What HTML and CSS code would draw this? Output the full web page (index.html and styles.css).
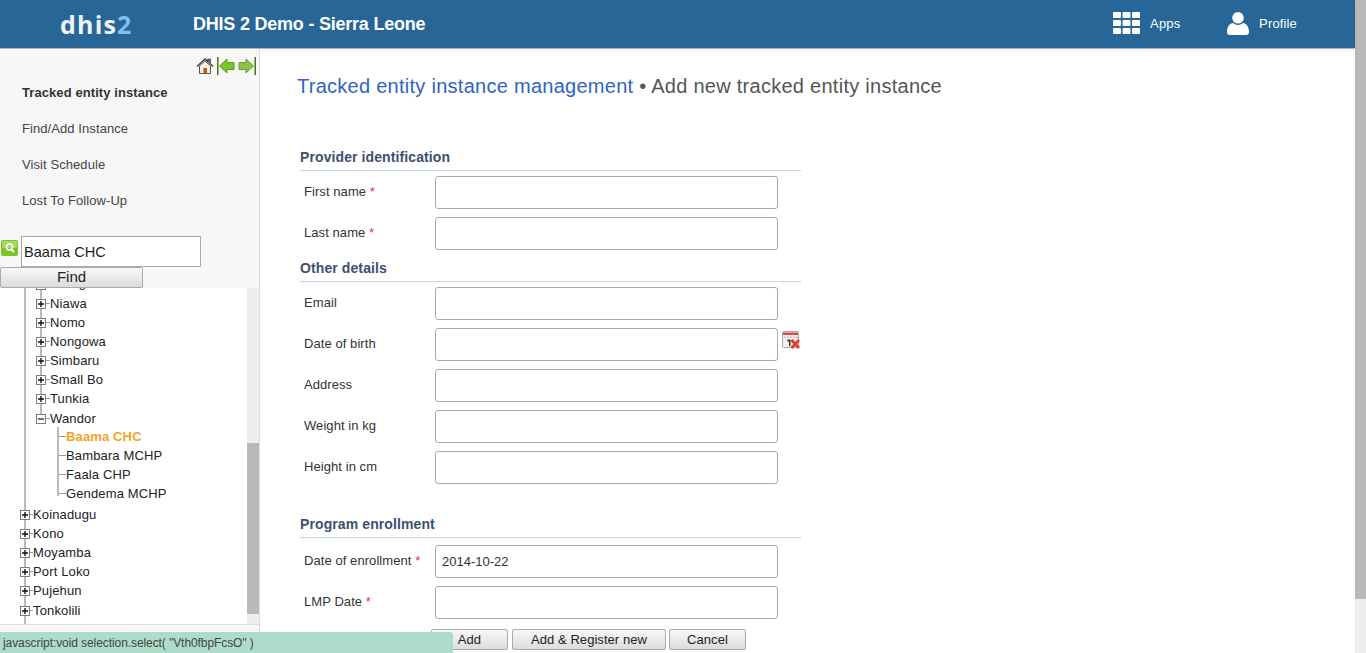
FILE: index.html
```html
<!DOCTYPE html>
<html lang="en">
<head>
<meta charset="utf-8">
<title>DHIS 2 Demo - Sierra Leone</title>
<link rel="stylesheet" href="styles.css">
</head>
<body>
<svg class="defs" width="0" height="0" aria-hidden="true">
  <symbol id="plus" viewBox="0 0 10 10"><rect x=".5" y=".5" width="9" height="9" fill="#fff" stroke="#7d7d7d"/><path d="M2 5h6M5 2v6" stroke="#111" stroke-width="1.400" fill="none"/></symbol>
  <symbol id="minus" viewBox="0 0 10 10"><rect x=".5" y=".5" width="9" height="9" fill="#fff" stroke="#7d7d7d"/><path d="M2 5h6" stroke="#111" stroke-width="1.200" fill="none"/></symbol>
</svg>
<div class="page">
  <div class="viewport">
    <header class="topbar">
      <div class="logo">dhis<span class="logo-two">2</span></div>
      <div class="site-title">DHIS 2 Demo - Sierra Leone</div>
      <nav class="top-nav">
        <a class="top-link apps-link">
          <svg class="apps-icon" width="27" height="22" viewBox="0 0 27 22"><g fill="#fff"><rect width="8" height="6" rx="1"/><rect x="9.500" width="8" height="6" rx="1"/><rect x="19" width="8" height="6" rx="1"/><rect y="8" width="8" height="6" rx="1"/><rect x="9.500" y="8" width="8" height="6" rx="1"/><rect x="19" y="8" width="8" height="6" rx="1"/><rect y="16" width="8" height="6" rx="1"/><rect x="9.500" y="16" width="8" height="6" rx="1"/><rect x="19" y="16" width="8" height="6" rx="1"/></g></svg>
          <span>Apps</span>
        </a>
        <a class="top-link profile-link">
          <svg width="22" height="23" viewBox="0 0 22 23"><g fill="#fff"><circle cx="11" cy="5.800" r="5.800"/><path d="M0 20c0-6 3-8.500 6-9 1.500 1.300 3 2 5 2s3.500-.7 5-2c3 .5 6 3 6 9 0 2-1 3-3 3H3c-2 0-3-1-3-3z"/></g></svg>
          <span>Profile</span>
        </a>
      </nav>
    </header>
    <div class="workspace">
      <aside class="sidebar">
        <div class="side-tools">
          <svg class="tool-home" width="18" height="18" viewBox="0 0 18 18"><path d="M1 9.500 9 2l3 2.800V2.500h2v4.200l3 2.800" fill="none" stroke="#444" stroke-width="1.600"/><path d="M3.500 9 9 4l5.500 5v7.500h-11z" fill="#f6f1e4" stroke="#555"/><rect x="7.500" y="11" width="3.500" height="5.500" fill="#c25a05"/></svg>
          <svg class="tool-arrow" width="18" height="18" viewBox="0 0 18 18"><rect width="1.500" height="18" fill="#3f7a0a"/><path d="M2.500 9 10 2v3.500h7v7h-7V16z" fill="#7cc332" stroke="#5c9a1c"/></svg>
          <svg class="tool-arrow" width="18" height="18" viewBox="0 0 18 18"><rect x="16.500" width="1.500" height="18" fill="#3f7a0a"/><path d="M15.500 9 8 2v3.500H1v7h7V16z" fill="#8ac24a" stroke="#6c9a36"/></svg>
        </div>
        <ul class="side-menu">
          <li class="side-item side-item-active">Tracked entity instance</li>
          <li class="side-item">Find/Add Instance</li>
          <li class="side-item">Visit Schedule</li>
          <li class="side-item">Lost To Follow-Up</li>
        </ul>
        <div class="search-row">
          <svg class="search-icon" width="17" height="17" viewBox="0 0 17 17"><rect width="17" height="16" rx="2" fill="#7ec428"/><rect x="1" y="1" width="15" height="7" rx="1.500" fill="#a5dc60"/><circle cx="8.500" cy="7" r="3" fill="none" stroke="#fff" stroke-width="1.500"/><path d="M10.500 9.500 13 12" stroke="#fff" stroke-width="1.800"/></svg>
          <input class="search-input" type="text" value="Baama CHC">
        </div>
        <button class="find-button" type="button">Find</button>
        <div class="tree-wrap">
          <div class="tree-pane">
            <ul class="tree-root">
              <li>
                <ul class="tree-branch">
                  <li class="node"><svg class="exp"><use href="#plus"/></svg><i class="dash"></i><span class="clipped-label">Malegohun</span></li>
                  <li class="node"><svg class="exp"><use href="#plus"/></svg><i class="dash"></i>Niawa</li>
                  <li class="node"><svg class="exp"><use href="#plus"/></svg><i class="dash"></i>Nomo</li>
                  <li class="node"><svg class="exp"><use href="#plus"/></svg><i class="dash"></i>Nongowa</li>
                  <li class="node"><svg class="exp"><use href="#plus"/></svg><i class="dash"></i>Simbaru</li>
                  <li class="node"><svg class="exp"><use href="#plus"/></svg><i class="dash"></i>Small Bo</li>
                  <li class="node"><svg class="exp"><use href="#plus"/></svg><i class="dash"></i>Tunkia</li>
                  <li class="node node-wandor"><svg class="exp"><use href="#minus"/></svg><i class="dash"></i>Wandor</li>
                  <li>
                    <ul class="tree-leaves">
                      <li class="leaf leaf-selected"><i class="tick"></i>Baama CHC</li>
                      <li class="leaf"><i class="tick"></i>Bambara MCHP</li>
                      <li class="leaf"><i class="tick"></i>Faala CHP</li>
                      <li class="leaf"><i class="tick"></i>Gendema MCHP</li>
                    </ul>
                  </li>
                </ul>
              </li>
              <li class="node top"><svg class="exp"><use href="#plus"/></svg><i class="dash"></i>Koinadugu</li>
              <li class="node top"><svg class="exp"><use href="#plus"/></svg><i class="dash"></i>Kono</li>
              <li class="node top"><svg class="exp"><use href="#plus"/></svg><i class="dash"></i>Moyamba</li>
              <li class="node top"><svg class="exp"><use href="#plus"/></svg><i class="dash"></i>Port Loko</li>
              <li class="node top"><svg class="exp"><use href="#plus"/></svg><i class="dash"></i>Pujehun</li>
              <li class="node top node-last"><svg class="exp"><use href="#plus"/></svg><i class="dash"></i>Tonkolili</li>
            </ul>
          </div>
          <div class="tree-scrollbar"><div class="tree-thumb"></div></div>
        </div>
      </aside>
      <main class="content">
        <h1 class="page-title"><a class="title-link">Tracked entity instance management</a> • Add new tracked entity instance</h1>
        <form class="entity-form">
          <h2 class="section-head first">Provider identification</h2>
          <div class="field"><label>First name <em>*</em></label><input type="text"></div>
          <div class="field"><label>Last name <em>*</em></label><input type="text"></div>
          <h2 class="section-head tight">Other details</h2>
          <div class="field"><label>Email</label><input type="text"></div>
          <div class="field"><label>Date of birth</label><input type="text">
            <svg class="cal-icon" width="18" height="18" viewBox="0 0 18 18"><rect x=".5" y=".5" width="16" height="16" rx="1" fill="#f1f1f1" stroke="#aaa"/><rect x="1" y="1.500" width="15" height="2.500" fill="#e2474b"/><path d="M3 5.500V7M6 5.500V7M9 5.500V7M12 5.500V7M15 5.500V7" stroke="#999"/><path d="M5.500 8.500h3V15H7v-4.500H5.500z" fill="#333"/><path d="m9.500 9 7.500 8m0-8-7.500 8" stroke="#e03a2a" stroke-width="2.800"/></svg>
          </div>
          <div class="field"><label>Address</label><input type="text"></div>
          <div class="field"><label>Weight in kg</label><input type="text"></div>
          <div class="field"><label>Height in cm</label><input type="text"></div>
          <h2 class="section-head wide">Program enrollment</h2>
          <div class="field field-after-wide"><label>Date of enrollment <em>*</em></label><input type="text" value="2014-10-22"></div>
          <div class="field"><label>LMP Date <em>*</em></label><input type="text"></div>
          <div class="form-actions">
            <button class="btn btn-add" type="button">Add</button>
            <button class="btn btn-register" type="button">Add &amp; Register new</button>
            <button class="btn btn-cancel" type="button">Cancel</button>
          </div>
        </form>
      </main>
    </div>
  </div>
  <div class="page-scrollbar"><div class="page-thumb"></div></div>
</div>
<div class="status-tip">javascript:void selection.select( "Vth0fbpFcsO" )</div>
</body>
</html>
```

FILE: styles.css
```css
* { box-sizing: border-box; }
html, body { margin: 0; height: 100%; overflow: hidden; }
body { font-family: "Liberation Sans", Arial, sans-serif; font-size: 13px; color: #333; background: #fff; }
.defs { position: absolute; }
ul { list-style: none; margin: 0; padding: 0; }

.page { display: flex; height: 653px; }
.viewport { flex: 1; min-width: 0; display: flex; flex-direction: column; }
.page-scrollbar { width: 11px; background: #eee; }
.page-thumb { height: 599px; background: #b9b9b9; }

.topbar { flex: none; height: 49px; display: flex; align-items: center; background: #276696; border-bottom: 1px solid #b5b5b5; color: #fff; position: relative; box-shadow: 0 1px 3px rgba(0,0,0,.08); }
.logo { width: 193px; padding-left: 60px; font-family: "Open Sans", sans-serif; font-weight: 700; font-size: 25px; letter-spacing: 1.2px; line-height: 48px; color: #eef4f8; }
.logo-two { color: #7cc0f2; }
.site-title { font-weight: 700; font-size: 18px; letter-spacing: -.22px; }
.top-nav { margin-left: auto; display: flex; padding-right: 58px; padding-bottom: 2px; }
.top-link { display: flex; align-items: center; font-size: 13px; color: #fff; letter-spacing: .15px; }
.apps-link { gap: 10px; width: 114px; }
.profile-link { gap: 10px; }

.workspace { flex: 1; min-height: 0; display: flex; }
.sidebar { flex: none; width: 260px; background: #f7f7f7; border-right: 1px solid #ddd; display: flex; flex-direction: column; position: relative; }
.side-tools { height: 26px; display: flex; align-items: flex-start; justify-content: flex-end; padding: 8px 3px 0 0; gap: 3px; }
.side-menu { padding-left: 22px; margin-bottom: 17px; }
.side-item { height: 36px; line-height: 36px; color: #444; white-space: nowrap; letter-spacing: .08px; }
.side-item-active { font-weight: 700; color: #333; }
.search-row { display: flex; height: 31px; align-items: flex-start; }
.search-icon { margin: 4px 3px 0 1px; flex: none; }
.search-input { width: 180px; height: 31px; border: 1px solid #aaa; background: #fff; font: 14.6px "Liberation Sans", Arial, sans-serif; color: #222; padding: 0 2px; border-radius: 0; outline: none; }
.find-button { width: 143px; height: 21px; padding: 0 0 1px; border: 1px solid #aaa; border-radius: 2px; background: linear-gradient(#f8f8f8, #dcdcdc); font: 15px "Liberation Sans", Arial, sans-serif; color: #222; line-height: 18px; flex: none; }
.tree-wrap { height: 337px; flex: none; display: flex; background: #fff; border-bottom: 1px solid #ddd; }
.tree-pane { flex: 1; min-width: 0; overflow: hidden; }
.tree-scrollbar { flex: none; width: 12px; background: #eee; padding-top: 155px; }
.tree-thumb { height: 171px; background: #b9b9b9; }

.tree-root { margin: -13px 0 0 24px; border-left: 2px solid #bbb; height: 380px; color: #222; }
.tree-branch { margin-left: 14px; border-left: 2px solid #bbb; height: 143px; margin-bottom: 87px; }
.tree-leaves { margin: 0 0 0 15px; border-left: 2px solid #bbb; height: 69px; }
.node, .leaf { display: flex; align-items: center; height: 19px; white-space: nowrap; color: #222; letter-spacing: .14px; }
.clipped-label { margin-bottom: 4px; }
.exp { width: 10px; height: 10px; flex: none; margin-left: -6px; }
.dash { width: 4px; height: 1px; background: #999; flex: none; }
.top .dash { width: 3px; }
.tick { width: 7px; height: 1px; background: #999; flex: none; }
.leaf-selected { font-weight: 700; color: #f9a21f; }
.node-wandor { position: relative; top: 1px; }
.node-last { position: relative; top: 1px; }

.content { flex: 1; min-width: 0; position: relative; }
.page-title { margin: 0; padding: 24px 0 0 37px; height: 91px; font-size: 20px; line-height: 26px; font-weight: 400; color: #555; white-space: nowrap; letter-spacing: .27px; }
.title-link { color: #3162c5; }
.entity-form { margin-left: 40px; width: 501px; }
.section-head { margin: 0; height: 31px; padding: 9px 0 0; font-size: 14px; line-height: 16px; font-weight: 700; color: #3d5070; border-bottom: 1px solid #c6d4e4; letter-spacing: .1px; }
.section-head.tight { margin-top: 1px; }
.section-head.wide { margin-top: 23px; }
.section-head + .field { margin-top: 5px; }
.section-head + .field-after-wide { margin-top: 7px; }
.field { display: flex; align-items: center; height: 33px; margin-top: 8px; position: relative; }
.field label { width: 135px; padding-left: 4px; flex: none; color: #333; position: relative; top: -1px; letter-spacing: .07px; }
.field label em { font-style: normal; color: #e33; }
.field input { width: 343px; height: 33px; flex: none; border: 1px solid #aaa; border-radius: 3px; background: #fff; font: 13px "Liberation Sans", Arial, sans-serif; color: #333; padding: 0 6px; outline: none; }
.cal-icon { flex: none; margin: -9px 0 0 4px; }
.form-actions { display: flex; gap: 4px; margin: 10px 0 0 131px; }
.btn { height: 21px; padding: 0; border: 1px solid #aaa; border-radius: 2px; background: linear-gradient(#f8f8f8, #dcdcdc); font: 13px "Liberation Sans", Arial, sans-serif; color: #222; letter-spacing: .05px; }
.btn-add { width: 77px; }
.btn-register { width: 154px; }
.btn-cancel { width: 77px; margin-left: -1px; }

.status-tip { position: fixed; left: 0; bottom: 0; width: 453px; height: 21px; line-height: 22px; padding-left: 3px; background: #aedccb; border-top-right-radius: 3px; font-size: 12px; color: #444; white-space: nowrap; letter-spacing: -.08px; }
```
